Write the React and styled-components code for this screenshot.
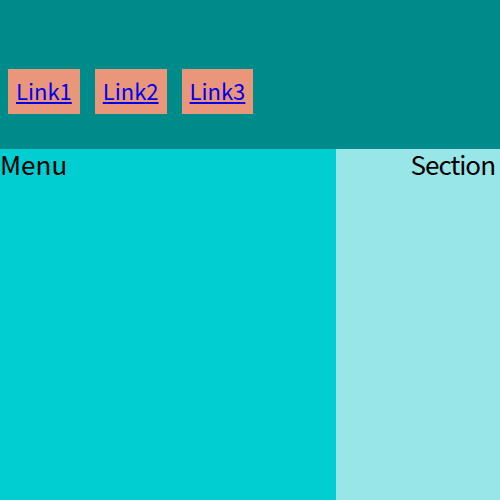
import styled, { createGlobalStyle } from "styled-components";

const GlobalStyle = createGlobalStyle`
  html, body {
    margin: 0;
    padding: 0;
  }
  body {
    font-family: "Noto Sans CJK SC", "Noto Sans", sans-serif;
  }
`;

const Page = styled.div`
  display: flex;
  flex-direction: column;
  width: 500px;
  height: 500px;
`;

const Header = styled.header`
  display: flex;
  align-items: flex-start;
  gap: 15px;
  height: 149px;
  box-sizing: border-box;
  padding: 69px 8px 0;
  background-color: #008b8b;
`;

const NavLink = styled.a`
  display: block;
  background-color: #e9967a;
  color: #0000ee;
  font-size: 22px;
  padding: 0 8px;
  height: 45px;
  line-height: 43px;
`;

const Body = styled.div`
  flex: 1;
  display: flex;
  font-size: 26px;
  line-height: 30px;
`;

const Menu = styled.div`
  width: 336px;
  background-color: #00ced1;
`;

const Section = styled.div`
  flex: 1;
  background-color: #98e6e8;
  text-align: right;
  padding-right: 5px;
  letter-spacing: -1px;
`;

const App = () => {
  return (
    <>
      <GlobalStyle />
      <Page>
        <Header>
          <NavLink href="#">Link1</NavLink>
          <NavLink href="#">Link2</NavLink>
          <NavLink href="#">Link3</NavLink>
        </Header>
        <Body>
          <Menu>Menu</Menu>
          <Section>Section</Section>
        </Body>
      </Page>
    </>
  );
};

export default App;
